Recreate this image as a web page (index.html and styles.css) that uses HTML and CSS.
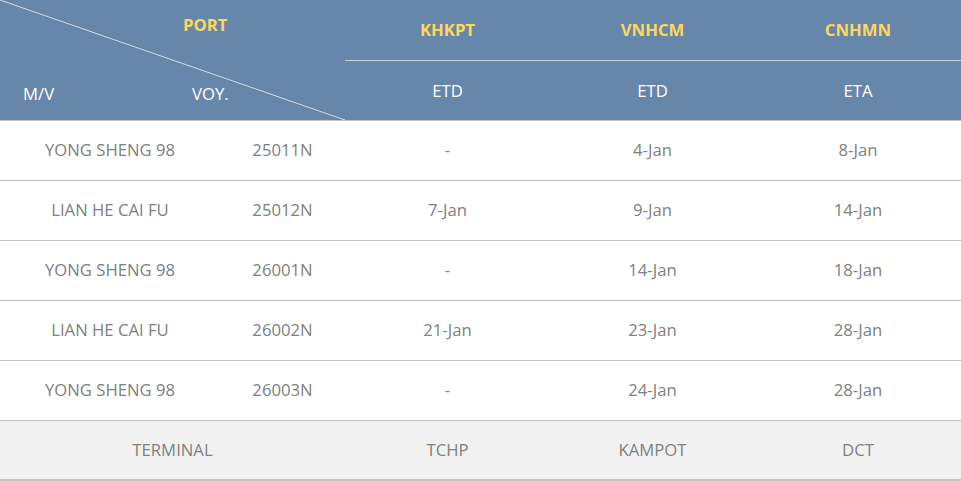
FILE: index.html
```html
<!DOCTYPE html>
<html>
<head>
<meta charset="utf-8">
<link rel="stylesheet" href="styles.css">
</head>
<body>
<div class="sched">
  <div class="head">
    <div class="diag">
      <svg class="diag-line" viewBox="0 0 345 120" preserveAspectRatio="none"><line x1="0" y1="0" x2="345" y2="120" stroke="#d6dbe2" stroke-width="1"/></svg>
      <div class="port-lbl">PORT</div>
      <div class="diag-bottom"><span class="mv">M/V</span><span class="voy">VOY.</span></div>
    </div>
    <div class="port">KHKPT</div>
    <div class="port">VNHCM</div>
    <div class="port">CNHMN</div>
    <div class="sub">ETD</div>
    <div class="sub">ETD</div>
    <div class="sub">ETA</div>
  </div>
  <div class="row"><div>YONG SHENG 98</div><div>25011N</div><div>-</div><div>4-Jan</div><div>8-Jan</div></div>
  <div class="row"><div>LIAN HE CAI FU</div><div>25012N</div><div>7-Jan</div><div>9-Jan</div><div>14-Jan</div></div>
  <div class="row"><div>YONG SHENG 98</div><div>26001N</div><div>-</div><div>14-Jan</div><div>18-Jan</div></div>
  <div class="row"><div>LIAN HE CAI FU</div><div>26002N</div><div>21-Jan</div><div>23-Jan</div><div>28-Jan</div></div>
  <div class="row"><div>YONG SHENG 98</div><div>26003N</div><div>-</div><div>24-Jan</div><div>28-Jan</div></div>
  <div class="row term"><div class="span2">TERMINAL</div><div>TCHP</div><div>KAMPOT</div><div>DCT</div></div>
</div>
</body>
</html>
```
FILE: styles.css
```css
html, body {
  margin: 0;
  padding: 0;
  background: #ffffff;
}
body {
  font-family: "Open Sans", "Noto Sans", sans-serif;
  font-size: 16.7px;
}
.sched {
  width: 961px;
}
.head, .row {
  display: grid;
  grid-template-columns: 220px 125px 205px 205px 206px;
}
.head {
  grid-template-rows: 61px 59px;
  background: #6787aa;
  color: #ffffff;
}
.diag {
  grid-column: 1 / span 2;
  grid-row: 1 / span 2;
  position: relative;
  display: flex;
  flex-direction: column;
}
.diag-line {
  position: absolute;
  left: 0;
  top: 0;
  width: 100%;
  height: 100%;
}
.port-lbl {
  color: #ffd75e;
  font-weight: bold;
  height: 60px;
  box-sizing: border-box;
  padding: 13px 0 0 183px;
  line-height: 24px;
}
.diag-bottom {
  display: flex;
  padding: 22px 0 0 23px;
  line-height: 24px;
}
.mv { width: 169px; }
.port {
  color: #ffd75e;
  font-weight: bold;
  display: flex;
  align-items: center;
  justify-content: center;
  box-sizing: border-box;
  border-bottom: 1px solid #c9cfd8;
  padding-bottom: 2px;
}
.sub {
  display: flex;
  align-items: center;
  justify-content: center;
  padding-bottom: 1px;
}
.row {
  height: 60px;
  box-sizing: border-box;
  border-top: 1px solid #c4c4c4;
  color: #808080;
}
.row > div {
  display: flex;
  align-items: center;
  justify-content: center;
  padding-bottom: 2px;
}
.row > .span2 {
  grid-column: 1 / span 2;
}
.term {
  background: #f1f1f1;
  border-bottom: 2px solid #c4c4c4;
  height: 61px;
}
```
